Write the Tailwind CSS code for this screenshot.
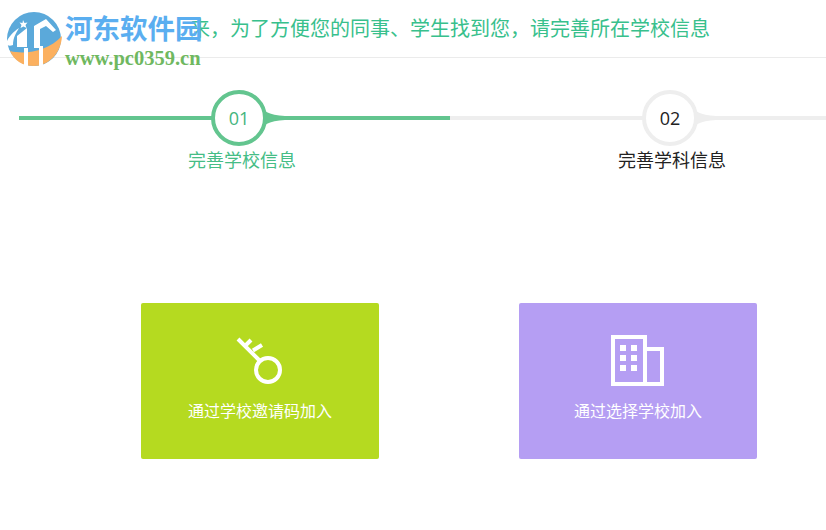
<!DOCTYPE html>
<html lang="zh">
<head>
  <meta charset="utf-8" />
  <title>完善学校信息</title>
  <script src="https://cdn.jsdelivr.net/npm/@tailwindcss/browser@4"></script>
</head>
<body class="bg-white w-[826px] h-[530px] overflow-hidden relative font-['Open_Sans','Noto_Sans_CJK_SC',sans-serif]">
  <!-- watermark sits over the header -->
  <div class="absolute left-[5px] top-[11px] flex items-start z-10">
    <svg width="58" height="58" viewBox="0 0 58 58">
      <circle cx="29" cy="28" r="27" fill="#5ba9da" />
      <path d="M57 25c-1 18-14 30-28 30C17 55 9 49 5 40c16 4 38 0 52-15z" fill="#fbb05f" />
      <path d="M1 33c2-7 7-12 13-16-3 5-6 10-6 17-3 1-5 1-7-1z" fill="#fff" />
      <path d="M12 36V25l10-8v19z" fill="#fff" />
      <path d="M29 37V15l12-7 10 11-3 2-7-6-6 3v19z" fill="#fff" />
      <path d="M19 37h4v19h-4zM34 35h4v21h-4z" fill="#fff" />
      <path d="M18 9l1.500 3 3-.5-2 2.500 1 3-3-1.500-3 1.500 1-3-2-2.500 3 .5z" fill="#fff" />
    </svg>
    <div class="ml-[2px] mt-[1px] flex flex-col">
      <span class="font-['Liberation_Serif','Noto_Sans_CJK_SC',sans-serif] font-bold text-[27.5px] leading-[36px] text-[#5aaef0] whitespace-nowrap">河东软件园</span>
      <span class="font-['Liberation_Serif',serif] font-bold text-[20.500px] leading-[20px] text-[#6fb85f] whitespace-nowrap">www.pc0359.cn</span>
    </div>
  </div>

  <header class="h-[58px] border-b border-[#ebebeb] pl-[190px] flex items-center">
    <p class="text-[20px] leading-[28px] text-[#38c08c] whitespace-nowrap">来，为了方便您的同事、学生找到您，请完善所在学校信息</p>
  </header>

  <main>
    <section class="flex pl-[19px] pt-[32px]">
      <div class="relative w-[431px] h-[80px]">
        <div class="mt-[26px] h-[4px] bg-[#63c58f]"></div>
        <svg class="absolute left-[188px] top-0" width="84" height="56" viewBox="0 0 84 56">
          <path d="M50 12c4 9 12 13 28 14v4c-16 1-24 5-28 14z" fill="#63c58f" />
          <circle cx="32" cy="28" r="26" fill="#fff" stroke="#63c58f" stroke-width="4" />
        </svg>
        <span class="absolute left-[188px] top-0 w-[64px] h-[56px] flex items-center justify-center text-[18px] text-[#44b57d]">01</span>
        <p class="absolute left-[169px] top-[57px] text-[18px] leading-[26px] text-[#45bd86] whitespace-nowrap">完善学校信息</p>
      </div>
      <div class="relative flex-1 h-[80px]">
        <div class="mt-[26px] h-[4px] bg-[#eeeeee]"></div>
        <svg class="absolute left-[188px] top-0" width="84" height="56" viewBox="0 0 84 56">
          <path d="M50 12c4 9 12 13 28 14v4c-16 1-24 5-28 14z" fill="#eeeeee" />
          <circle cx="32" cy="28" r="26" fill="#fff" stroke="#eeeeee" stroke-width="4" />
        </svg>
        <span class="absolute left-[188px] top-0 w-[64px] h-[56px] flex items-center justify-center text-[18px] text-[#222]">02</span>
        <p class="absolute left-[168px] top-[57px] text-[18px] leading-[26px] text-[#222] whitespace-nowrap">完善学科信息</p>
      </div>
    </section>

    <section class="flex gap-[140px] pl-[141px] pt-[133px]">
      <a class="w-[238px] h-[156px] rounded-[2px] bg-[#b5da20] flex flex-col items-center text-white" href="#">
        <svg class="mt-[33px]" width="48" height="50" viewBox="0 0 48 50" fill="none" stroke="#fff" stroke-width="4">
          <circle cx="32" cy="34" r="12" />
          <path d="M2 3l22 22M9 10l6-6M17 14.500l9-5.500" />
        </svg>
        <span class="mt-[13px] text-[16px] leading-[24px] whitespace-nowrap">通过学校邀请码加入</span>
      </a>
      <a class="w-[238px] h-[156px] rounded-[2px] bg-[#b59ef3] flex flex-col items-center text-white" href="#">
        <svg class="mt-[32px]" width="54" height="51" viewBox="0 0 54 51" fill="none" stroke="#fff" stroke-width="4">
          <path d="M34 49H2V2h32zM34 14h17v35H34" />
          <g fill="#fff" stroke="none">
            <rect x="9" y="10" width="6" height="6" /><rect x="20" y="10" width="6" height="6" />
            <rect x="9" y="20" width="6" height="6" /><rect x="20" y="20" width="6" height="6" />
            <rect x="9" y="30" width="6" height="6" /><rect x="20" y="30" width="6" height="6" />
          </g>
        </svg>
        <span class="mt-[13px] text-[16px] leading-[24px] whitespace-nowrap">通过选择学校加入</span>
      </a>
    </section>
  </main>
</body>
</html>
